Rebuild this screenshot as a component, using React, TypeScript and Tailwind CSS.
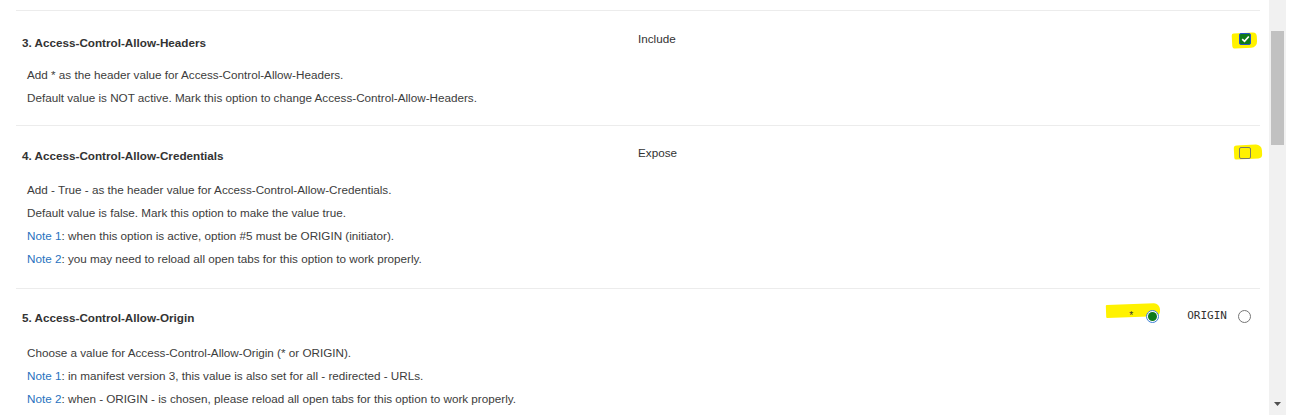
import React from "react";

const font = { fontFamily: '"Liberation Sans", Arial, sans-serif' };

function Highlight({ className }: { className: string }) {
  return <div className={"absolute bg-[#fff200] " + className} />;
}

function Checkbox({ checked }: { checked: boolean }) {
  return checked ? (
    <div className="relative w-[12px] h-[12px] rounded-[2px] border border-[#2454c8] bg-[#0f7a18] flex items-center justify-center">
      <svg width="9" height="8" viewBox="0 0 9 8">
        <path d="M1.2 4.2 L3.5 6.3 L7.8 1.5" fill="none" stroke="#fff" strokeWidth="1.7" />
      </svg>
    </div>
  ) : (
    <div className="relative w-[12px] h-[12px] rounded-[2px] border border-[#7a7a6a]" />
  );
}

function Radio({ checked }: { checked: boolean }) {
  return checked ? (
    <div className="relative w-[13px] h-[13px] rounded-full border border-[#3b7fd6] bg-white flex items-center justify-center">
      <div className="w-[9px] h-[9px] rounded-full bg-[#0d7a1a]" />
    </div>
  ) : (
    <div className="relative w-[13px] h-[13px] rounded-full border border-[#767676] bg-white" />
  );
}

function Line({ children }: { children: React.ReactNode }) {
  return <p className="h-[23px] leading-[23px]">{children}</p>;
}

function Note({ n, children }: { n: number; children: React.ReactNode }) {
  return (
    <Line>
      <span className="text-[#2872c0]">Note {n}</span>: {children}
    </Line>
  );
}

export default function App() {
  return (
    <div className="flex w-[1308px] h-[415px] overflow-hidden bg-white text-[11.7px] text-[#333]" style={font}>
      <div className="w-[1269px] pl-4 pr-[9px] pt-[10px]">
        {/* Section 3 */}
        <section className="border-t border-[#ececec] pt-[23px] pb-[16px]">
          <div className="flex h-[18px] items-start">
            <div className="w-[622px] pl-[6px] pt-[1px] font-bold leading-[16px]">3. Access-Control-Allow-Headers</div>
            <div className="flex-1 -mt-[3px] leading-[16px]">Include</div>
            <div className="relative mr-[9px] -mt-[1px]">
              <Highlight className="left-[-7px] top-[0px] w-[25px] h-[15px] rounded-[2px_4px_6px_3px] rotate-[-3deg]" />
              <Checkbox checked />
            </div>
          </div>
          <div className="pl-[11px] mt-[11px] text-[#3c3c3c]">
            <Line>Add * as the header value for Access-Control-Allow-Headers.</Line>
            <Line>Default value is NOT active. Mark this option to change Access-Control-Allow-Headers.</Line>
          </div>
        </section>

        {/* Section 4 */}
        <section className="border-t border-[#ececec] pt-[21px] pb-[18px]">
          <div className="flex h-[18px] items-start">
            <div className="w-[622px] pl-[6px] pt-[1px] font-bold leading-[16px]">4. Access-Control-Allow-Credentials</div>
            <div className="flex-1 -mt-[2px] leading-[16px]">Expose</div>
            <div className="relative mr-[9px] mt-[0px]">
              <Highlight className="left-[-5px] top-[-2px] w-[28px] h-[14px] rounded-[3px_6px_4px_2px] rotate-[-3deg]" />
              <Checkbox checked={false} />
            </div>
          </div>
          <div className="pl-[11px] mt-[13px] text-[#3c3c3c]">
            <Line>Add - True - as the header value for Access-Control-Allow-Credentials.</Line>
            <Line>Default value is false. Mark this option to make the value true.</Line>
            <Note n={1}>when this option is active, option #5 must be ORIGIN (initiator).</Note>
            <Note n={2}>you may need to reload all open tabs for this option to work properly.</Note>
          </div>
        </section>

        {/* Section 5 */}
        <section className="border-t border-[#ececec] pt-[20px]">
          <div className="flex h-[18px] items-start">
            <div className="flex-1 pl-[6px] pt-[1px] font-bold leading-[16px]">5. Access-Control-Allow-Origin</div>
            <div className="flex items-center mr-[9px] -mt-[1px]">
              <div className="relative flex items-center">
                <Highlight className="left-[-22px] top-[-5px] w-[54px] h-[13px] rounded-[1px_6px_5px_1px] rotate-[-2deg]" />
                <span className="relative text-[10px] mr-[12px]" style={{ fontFamily: '"Liberation Mono", monospace' }}>*</span>
                <Radio checked />
              </div>
              <span className="ml-[28px] mr-[11px] text-[11px] text-[#333]" style={{ fontFamily: '"DejaVu Sans Mono", "Liberation Mono", monospace' }}>ORIGIN</span>
              <Radio checked={false} />
            </div>
          </div>
          <div className="pl-[11px] mt-[14px] text-[#3c3c3c]">
            <Line>Choose a value for Access-Control-Allow-Origin (* or ORIGIN).</Line>
            <Note n={1}>in manifest version 3, this value is also set for all - redirected - URLs.</Note>
            <Note n={2}>when - ORIGIN - is chosen, please reload all open tabs for this option to work properly.</Note>
          </div>
        </section>
      </div>

      {/* scrollbar */}
      <div className="w-[17px] h-full bg-[#f1f1f1] flex flex-col items-center pt-[31px] pb-[9px]">
        <div className="w-[13px] h-[114px] bg-[#c1c1c1]" />
        <div className="mt-auto">
          <svg width="7" height="4" viewBox="0 0 7 4">
            <path d="M0 0 L7 0 L3.5 4 Z" fill="#505050" />
          </svg>
        </div>
      </div>
    </div>
  );
}
